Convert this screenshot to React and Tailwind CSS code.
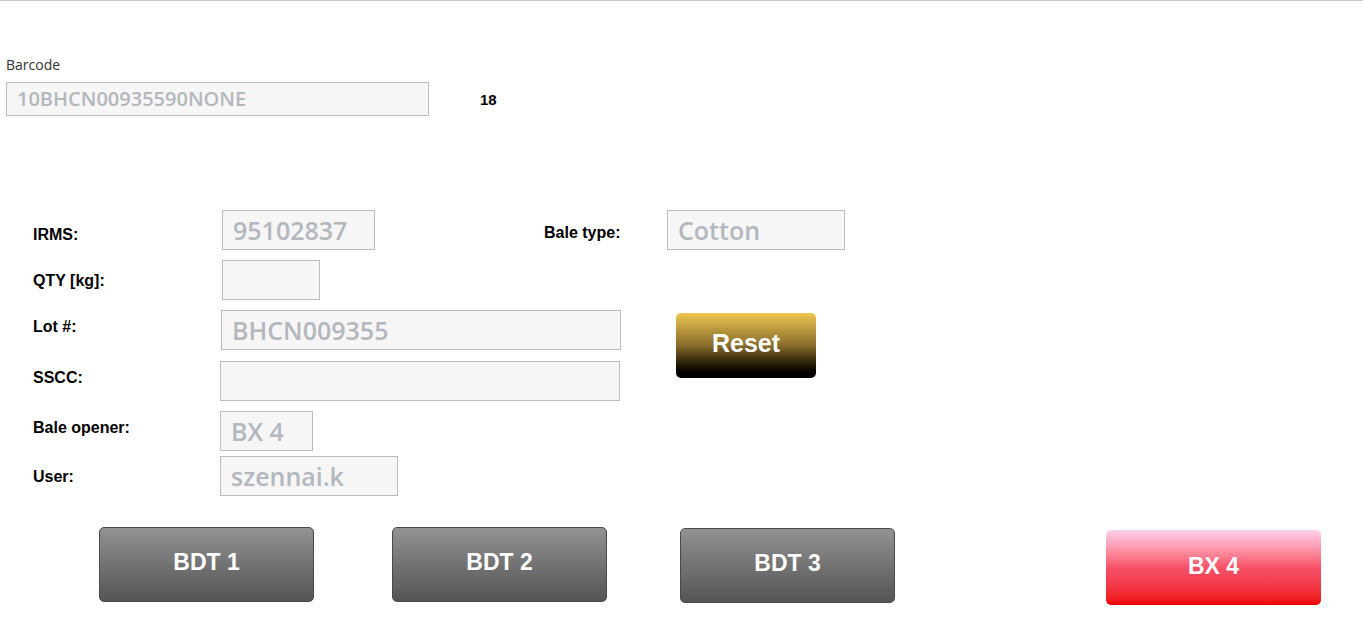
import React from "react";

const inputCls =
  "h-[40px] bg-[#f6f6f6] border border-[#bdbdbd] flex items-center pl-[10px] text-[25px] font-semibold text-[#b3b8be] leading-none whitespace-nowrap overflow-hidden";
const labelCls = "text-[16px] leading-[18px] font-bold text-black";
const os = { fontFamily: '"Open Sans", sans-serif' };
const ar = { fontFamily: '"Liberation Sans", Arial, sans-serif' };

function GrayBtn({ children, cls }) {
  return (
    <button
      className={
        "w-[215px] h-[75px] rounded-[5px] border border-[#4a4a4a] bg-gradient-to-b from-[#929292] to-[#555555] text-white text-[23px] font-bold flex items-center justify-center pb-[4px] " +
        cls
      }
      style={ar}
    >
      {children}
    </button>
  );
}

export default function App() {
  return (
    <div
      className="w-[1363px] h-[631px] bg-white border-t border-[#c6c6c6] overflow-hidden"
      style={ar}
    >
      {/* Barcode */}
      <div className="pl-[6px] pt-[55px]" style={os}>
        <div className="text-[14px] leading-[18px] text-[#333333]">Barcode</div>
        <div className="flex items-center mt-[8px]">
          <div className="w-[423px] h-[34px] bg-[#f6f6f6] border border-[#bdbdbd] flex items-center pl-[10px] text-[20px] font-semibold text-[#b3b8be] leading-none">
            10BHCN00935590NONE
          </div>
          <div className="ml-[51px] text-[15px] font-bold text-black mt-[2px]" style={ar}>
            18
          </div>
        </div>
      </div>

      {/* Form */}
      <div className="pl-[33px] mt-[94px]">
        {/* IRMS row */}
        <div className="flex items-start">
          <div className={labelCls + " w-[189px] pt-[16px]"}>IRMS:</div>
          <div className={inputCls + " w-[153px]"} style={os}>
            95102837
          </div>
          <div className={labelCls + " w-[123px] pt-[14px] ml-[169px]"}>Bale type:</div>
          <div className={inputCls + " w-[178px]"} style={os}>
            Cotton
          </div>
        </div>

        {/* QTY */}
        <div className="flex items-start mt-[10px]">
          <div className={labelCls + " w-[189px] pt-[12px]"}>QTY [kg]:</div>
          <div className={inputCls + " w-[98px]"} />
        </div>

        {/* Lot + SSCC with Reset */}
        <div className="flex items-start mt-[10px]">
          <div className="flex flex-col">
            <div className="flex items-start">
              <div className={labelCls + " w-[188px] pt-[8px]"}>Lot #:</div>
              <div className={inputCls + " w-[400px]"} style={os}>
                BHCN009355
              </div>
            </div>
            <div className="flex items-start mt-[11px]">
              <div className={labelCls + " w-[187px] pt-[8px]"}>SSCC:</div>
              <div className={inputCls + " w-[400px]"} />
            </div>
          </div>
          <button className="ml-[55px] mt-[3px] w-[140px] h-[65px] rounded-[5px] bg-gradient-to-b from-[#efc650] via-[#8a6d2c] to-[#000000] text-white text-[25px] font-bold flex items-center justify-center pb-[4px]">
            Reset
          </button>
        </div>

        {/* Bale opener */}
        <div className="flex items-start mt-[10px]">
          <div className={labelCls + " w-[187px] pt-[8px]"}>Bale opener:</div>
          <div className={inputCls + " w-[93px]"} style={os}>
            BX 4
          </div>
        </div>

        {/* User */}
        <div className="flex items-start mt-[5px]">
          <div className={labelCls + " w-[187px] pt-[12px]"}>User:</div>
          <div className={inputCls + " w-[178px]"} style={os}>
            szennai.k
          </div>
        </div>
      </div>

      {/* Buttons */}
      <div className="flex items-start pl-[99px] mt-[31px]">
        <GrayBtn cls="">BDT 1</GrayBtn>
        <GrayBtn cls="ml-[78px]">BDT 2</GrayBtn>
        <GrayBtn cls="ml-[73px] mt-[1px]">BDT 3</GrayBtn>
        <button
          className="ml-[211px] mt-[3px] w-[215px] h-[75px] rounded-[5px] bg-gradient-to-b from-[#fcd0ee] via-[#f65068] to-[#ee0000] text-white text-[23px] font-bold flex items-center justify-center pb-[2px]"
          style={ar}
        >
          BX 4
        </button>
      </div>
    </div>
  );
}
